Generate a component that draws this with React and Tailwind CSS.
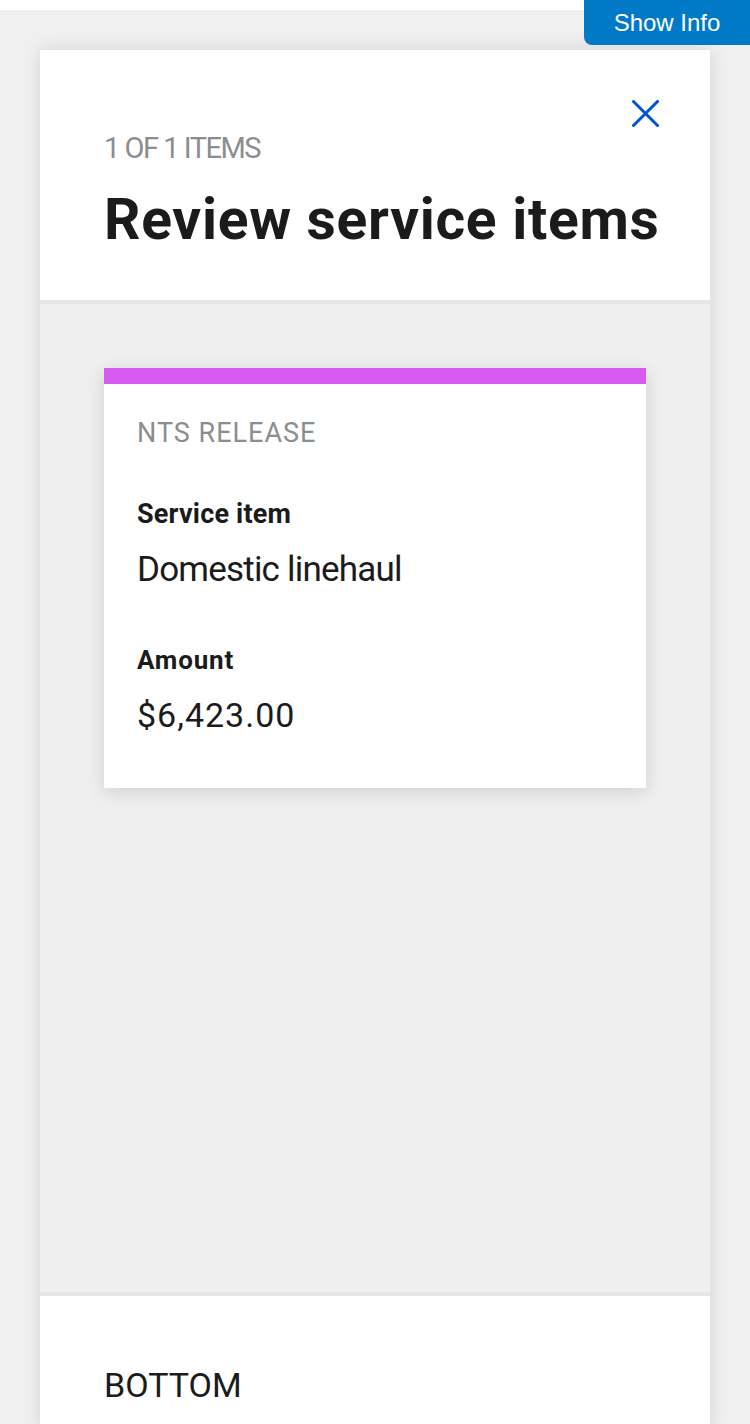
import React from "react";

export default function App() {
  const sans = { fontFamily: "Roboto, 'Liberation Sans', sans-serif" };
  return (
    <div className="min-h-[1424px] w-[750px] bg-[#f0f0f0] relative overflow-hidden" style={sans}>
      <div className="h-[10px] bg-white" />
      <button className="absolute top-0 right-0 w-[166px] h-[45px] bg-[#0079c6] text-white rounded-bl-[8px] text-[24px] flex items-center justify-center" style={{ fontFamily: "'Liberation Sans', Arial, sans-serif" }}>
        Show Info
      </button>
      <div className="mt-[40px] mx-[40px] w-[670px] bg-[#efefef] shadow-[0_0_18px_rgba(0,0,0,0.12)] flex flex-col min-h-[1380px]">
        <div className="bg-white px-[64px] pt-[50px] pb-[52px] border-b-[4px] border-[#e6e6e6]">
          <div className="flex justify-end -mr-[13px]">
            <svg width="27" height="27" viewBox="0 0 27 27" className="block">
              <path d="M1.5 1.5 L25.5 25.5 M25.5 1.5 L1.5 25.5" stroke="#0050d8" strokeWidth="3" strokeLinecap="round" />
            </svg>
          </div>
          <div className="mt-[7px] text-[29px] leading-[29px] text-[#8d8d8d] tracking-[-1.5px]">1 OF 1 ITEMS</div>
          <h1 className="mt-[28px] text-[57px] leading-[57px] font-bold text-[#1b1b1b] tracking-[0.7px] whitespace-nowrap">Review service items</h1>
        </div>
        <div className="h-[988px] p-[64px]">
          <div className="bg-white shadow-[0_4px_18px_rgba(0,0,0,0.13)] border-t-[16px] border-[#d85bef] px-[33px] pt-[36px] pb-[56px] w-[542px]">
            <div className="text-[27px] leading-[27px] text-[#8d8d8d] tracking-[1px]">NTS RELEASE</div>
            <div className="mt-[54px] text-[27px] leading-[27px] font-bold text-[#1b1b1b] tracking-[0.2px]">Service item</div>
            <div className="mt-[24px] text-[35px] leading-[35px] text-[#1b1b1b] tracking-[-0.8px]">Domestic linehaul</div>
            <div className="mt-[60px] text-[26px] leading-[26px] font-bold text-[#1b1b1b] tracking-[0.8px]">Amount</div>
            <div className="mt-[25px] text-[34px] leading-[34px] text-[#1b1b1b] tracking-[1px]">$6,423.00</div>
          </div>
        </div>
        <div className="bg-white border-t-[4px] border-[#e6e6e6] px-[64px] pt-[72px] flex-1">
          <div className="text-[34px] leading-[34px] text-[#1b1b1b]">BOTTOM</div>
        </div>
      </div>
    </div>
  );
}
